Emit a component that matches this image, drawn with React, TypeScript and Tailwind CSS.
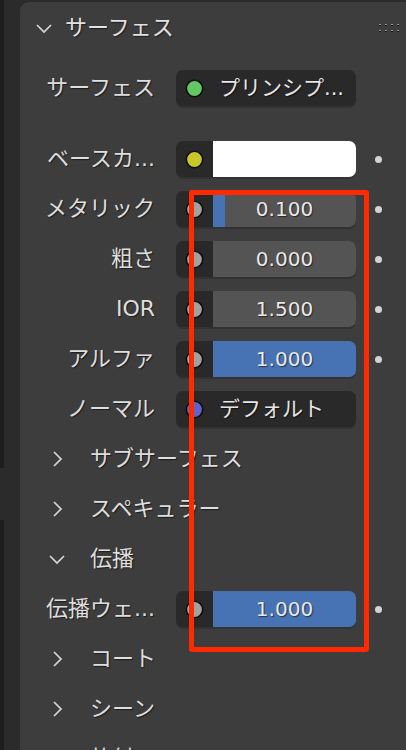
import React from "react";

const labelFont = "font-['DejaVu_Sans','Noto_Sans_CJK_JP',sans-serif]";
const shadow = "[text-shadow:1px_1px_1px_rgba(0,0,0,0.55)]";

function Chevron({ open }: { open: boolean }) {
    return open ? (
        <svg width="18" height="12" viewBox="0 0 18 12">
            <polyline points="2,3 9,10 16,3" fill="none" stroke="#d6d6d6" strokeWidth="1.7" />
        </svg>
    ) : (
        <svg width="12" height="18" viewBox="0 0 12 18">
            <polyline points="3,2 10,9 3,16" fill="none" stroke="#d6d6d6" strokeWidth="1.7" />
        </svg>
    );
}

function Grip() {
    const xs = [0, 6, 12, 18];
    const ys = [0, 6];
    return (
        <svg width="22" height="10" viewBox="0 0 22 10">
            {ys.map((y) =>
                xs.map((x) => (
                    <g key={`${x}-${y}`}>
                        <rect x={x} y={y} width="2" height="1" fill="#9a9a9a" />
                        <rect x={x} y={y + 1} width="2" height="1" fill="#141414" />
                    </g>
                )),
            )}
        </svg>
    );
}

function Socket({ color }: { color: string }) {
    return (
        <svg width="19" height="19" viewBox="0 0 19 19" className="block h-[19px] w-[19px] shrink-0">
            <circle cx="9.5" cy="9.5" r="8.2" fill={color} stroke="#0d0d0d" strokeWidth="1.6" />
        </svg>
    );
}

function Label({ text }: { text: string }) {
    return (
        <div className={`w-[135px] shrink-0 text-right text-[22px] leading-none text-[#dedede] ${labelFont} ${shadow}`}>
            {text}
        </div>
    );
}

function KeyDot() {
    return <span className="ml-[19px] h-[7px] w-[7px] rounded-full bg-[#d4d4d4]"></span>;
}

function SliderRow({ label, value, fill }: { label: string; value: string; fill: number }) {
    return (
        <div className="flex h-[50px] items-center">
            <Label text={label} />
            <div className="ml-[21px] flex h-[36px] w-[180px] overflow-hidden rounded-[7px] bg-[#292929] shadow-[0_2px_0_rgba(0,0,0,0.18)]">
                <div className="flex w-[37px] shrink-0 items-center justify-center">
                    <Socket color="#a1a1a1" />
                </div>
                <div className="relative flex-1 bg-[#545454]">
                    <div className="absolute inset-y-0 left-0 bg-[#4772b3]" style={{ width: `${fill * 100}%` }}></div>
                    <div className={`relative flex h-full items-center justify-center text-[20px] text-[#e8e8e8] font-['DejaVu_Sans',sans-serif] ${shadow}`}>
                        {value}
                    </div>
                </div>
            </div>
            <KeyDot />
        </div>
    );
}

function MenuRow({ label, value, color, h }: { label: string; value: string; color: string; h: string }) {
    return (
        <div className={`flex items-center ${h}`}>
            <Label text={label} />
            <div className="ml-[21px] flex h-[36px] w-[180px] items-center rounded-[7px] bg-[#292929] shadow-[0_2px_0_rgba(0,0,0,0.18)]">
                <div className="flex w-[37px] shrink-0 items-center justify-center">
                    <Socket color={color} />
                </div>
                <span className={`ml-[6px] text-[21px] leading-none text-[#e6e6e6] ${labelFont} ${shadow}`}>{value}</span>
            </div>
        </div>
    );
}

function SubPanel({ label, open }: { label: string; open: boolean }) {
    return (
        <div className="flex h-[50px] items-center">
            <div className={`flex w-[70px] shrink-0 ${open ? "pl-[28px]" : "pl-[31px]"}`}>
                <Chevron open={open} />
            </div>
            <span className={`text-[22px] leading-none text-[#dedede] ${labelFont} ${shadow}`}>{label}</span>
        </div>
    );
}

export default function App() {
    return (
        <div className="relative flex h-[750px] w-[406px] overflow-hidden bg-[#2b2b2b]">
            <div className="flex w-[4px] shrink-0 flex-col">
                <div className="h-[468px] bg-[#1d1d1d]"></div>
                <div className="h-[52px] bg-[#2b2b2b]"></div>
                <div className="flex-1 bg-[#1d1d1d]"></div>
            </div>
            <div className="w-[16px] shrink-0"></div>
            <div className="mt-[2px] flex-1 rounded-tl-[9px] bg-[#3d3d3d]">
                <div className="flex h-[52px] items-center">
                    <div className="ml-[15px] flex w-[18px] shrink-0">
                        <Chevron open />
                    </div>
                    <span className={`ml-[12px] text-[22px] leading-none text-[#e2e2e2] ${labelFont} ${shadow}`}>サーフェス</span>
                    <div className="ml-auto mr-[5px] mt-[2px]">
                        <Grip />
                    </div>
                </div>
                <MenuRow label="サーフェス" value="プリンシプ..." color="#63c763" h="h-[68px]" />
                <div className="h-[12px]"></div>
                <div className="flex h-[50px] items-center">
                    <Label text="ベースカ..." />
                    <div className="ml-[21px] flex h-[36px] w-[180px] overflow-hidden rounded-[7px] bg-[#292929] shadow-[0_2px_0_rgba(0,0,0,0.18)]">
                        <div className="flex w-[37px] shrink-0 items-center justify-center">
                            <Socket color="#c7c729" />
                        </div>
                        <div className="flex-1 bg-white"></div>
                    </div>
                    <KeyDot />
                </div>
                <SliderRow label="メタリック" value="0.100" fill={0.085} />
                <SliderRow label="粗さ" value="0.000" fill={0} />
                <SliderRow label="IOR" value="1.500" fill={0} />
                <SliderRow label="アルファ" value="1.000" fill={1} />
                <MenuRow label="ノーマル" value="デフォルト" color="#6363c7" h="h-[50px]" />
                <SubPanel label="サブサーフェス" open={false} />
                <SubPanel label="スペキュラー" open={false} />
                <SubPanel label="伝播" open />
                <SliderRow label="伝播ウェ..." value="1.000" fill={1} />
                <SubPanel label="コート" open={false} />
                <SubPanel label="シーン" open={false} />
                <SubPanel label="放射" open={false} />
            </div>
            <div className="pointer-events-none absolute left-[189px] top-[190px] h-[462px] w-[180px] rounded-[3px] border-[5px] border-[#ff2a00]"></div>
        </div>
    );
}
